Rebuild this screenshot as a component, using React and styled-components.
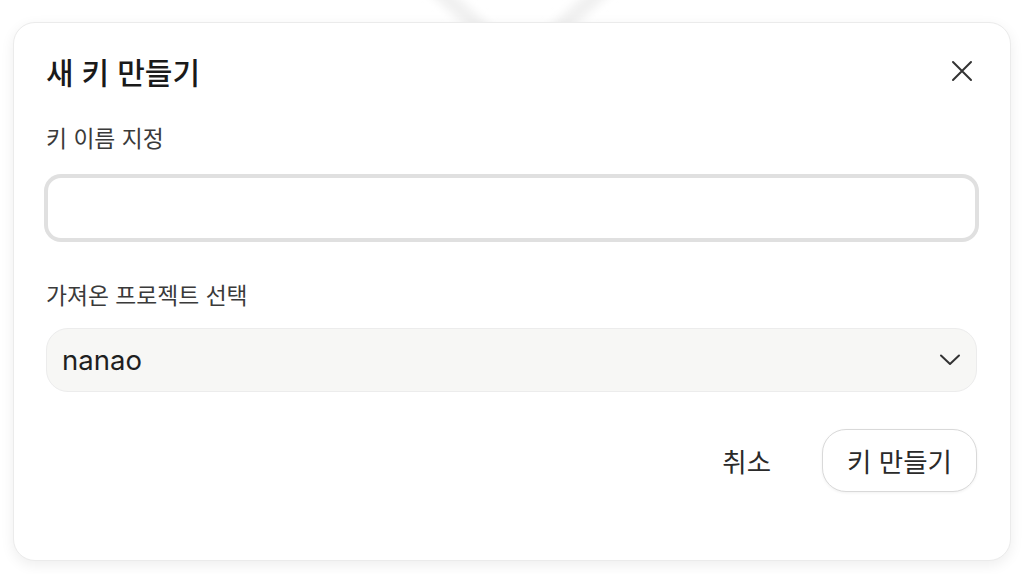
import React from 'react'
import styled, { createGlobalStyle } from 'styled-components'

const Global = createGlobalStyle`
  html, body {
    margin: 0;
    padding: 0;
    background: #ffffff;
  }
  body {
    font-family: Inter, "Noto Sans CJK KR", "Noto Sans", sans-serif;
    color: #222;
  }
`

const Page = styled.div`
  position: relative;
  width: 1036px;
  height: 574px;
  box-sizing: border-box;
  padding: 22px 25px 0 13px;
  overflow: hidden;
`

const Backdrop = styled.svg`
  position: absolute;
  left: 400px;
  top: -46px;
  width: 240px;
  height: 120px;
  z-index: 0;
`

const Dialog = styled.div`
  position: relative;
  z-index: 1;
  box-sizing: border-box;
  width: 998px;
  height: 539px;
  background: #fff;
  border: 1px solid #ebebeb;
  border-radius: 22px;
  box-shadow: 0 4px 14px rgba(0, 0, 0, 0.07);
  padding: 28px 33px 0 32px;
  display: flex;
  flex-direction: column;
`

const Header = styled.div`
  display: flex;
  align-items: center;
  justify-content: space-between;
  height: 40px;
`

const Title = styled.h2`
  margin: 0;
  font-size: 30px;
  font-weight: 500;
  color: #1a1a1a;
`

const CloseButton = styled.button`
  border: none;
  background: none;
  padding: 0;
  width: 30px;
  height: 30px;
  display: flex;
  align-items: center;
  justify-content: center;
  cursor: pointer;
  color: #333;
`

const Label = styled.label`
  display: block;
  font-size: 22.8px;
  line-height: 30px;
  color: #3a3a3a;
  margin-top: ${p => p.$top}px;
`

const TextInput = styled.input`
  box-sizing: border-box;
  width: 100%;
  height: 64px;
  margin-top: 22px;
  border: 2px solid #e0e0e0;
  box-shadow: 0 0 0 2px #e0e0e0;
  border-radius: 15px;
  background: #fff;
  outline: none;
  font-family: inherit;
  font-size: 22px;
  padding: 0 16px;
`

const Select = styled.div`
  box-sizing: border-box;
  margin-top: 17px;
  height: 64px;
  border: 1px solid #ececec;
  border-radius: 22px;
  background: #f7f7f5;
  display: flex;
  align-items: center;
  justify-content: space-between;
  padding: 0 15px 0 15px;
  font-size: 27.5px;
  color: #1f1f1f;
`

const Footer = styled.div`
  display: flex;
  justify-content: flex-end;
  align-items: center;
  gap: 27px;
  margin-top: 37px;
`

const Button = styled.button`
  font-family: inherit;
  font-size: 26.5px;
  color: #2a2a2a;
  height: 63px;
  padding: 0 24px;
  border-radius: 24px;
  background: #fff;
  border: ${p => (p.$outlined ? '1px solid #d9d9d9' : 'none')};
  box-shadow: ${p => (p.$outlined ? '0 1px 3px rgba(0,0,0,0.06)' : 'none')};
  cursor: pointer;
`

export default function App() {
  return (
    <Page>
      <Global />
      <Backdrop viewBox="0 0 240 120">
        <defs>
          <filter id="blur" x="-50%" y="-50%" width="200%" height="200%">
            <feGaussianBlur stdDeviation="5" />
          </filter>
        </defs>
        <path
          d="M20 20 L120 110 L220 20"
          fill="none"
          stroke="#f0f0f0"
          strokeWidth="16"
          strokeLinecap="round"
          filter="url(#blur)"
        />
      </Backdrop>
      <Dialog>
        <Header>
          <Title>새 키 만들기</Title>
          <CloseButton aria-label="닫기">
            <svg width="22" height="22" viewBox="0 0 22 22">
              <path d="M2 2 L20 20 M20 2 L2 20" stroke="#333" strokeWidth="2" strokeLinecap="round" />
            </svg>
          </CloseButton>
        </Header>
        <Label $top={33}>키 이름 지정</Label>
        <TextInput />
        <Label $top={41}>가져온 프로젝트 선택</Label>
        <Select>
          <span>nanao</span>
          <svg width="22" height="14" viewBox="0 0 22 14">
            <path d="M2 2.5 L11 11 L20 2.5" fill="none" stroke="#333" strokeWidth="2" strokeLinecap="round" strokeLinejoin="round" />
          </svg>
        </Select>
        <Footer>
          <Button>취소</Button>
          <Button $outlined>키 만들기</Button>
        </Footer>
      </Dialog>
    </Page>
  )
}
